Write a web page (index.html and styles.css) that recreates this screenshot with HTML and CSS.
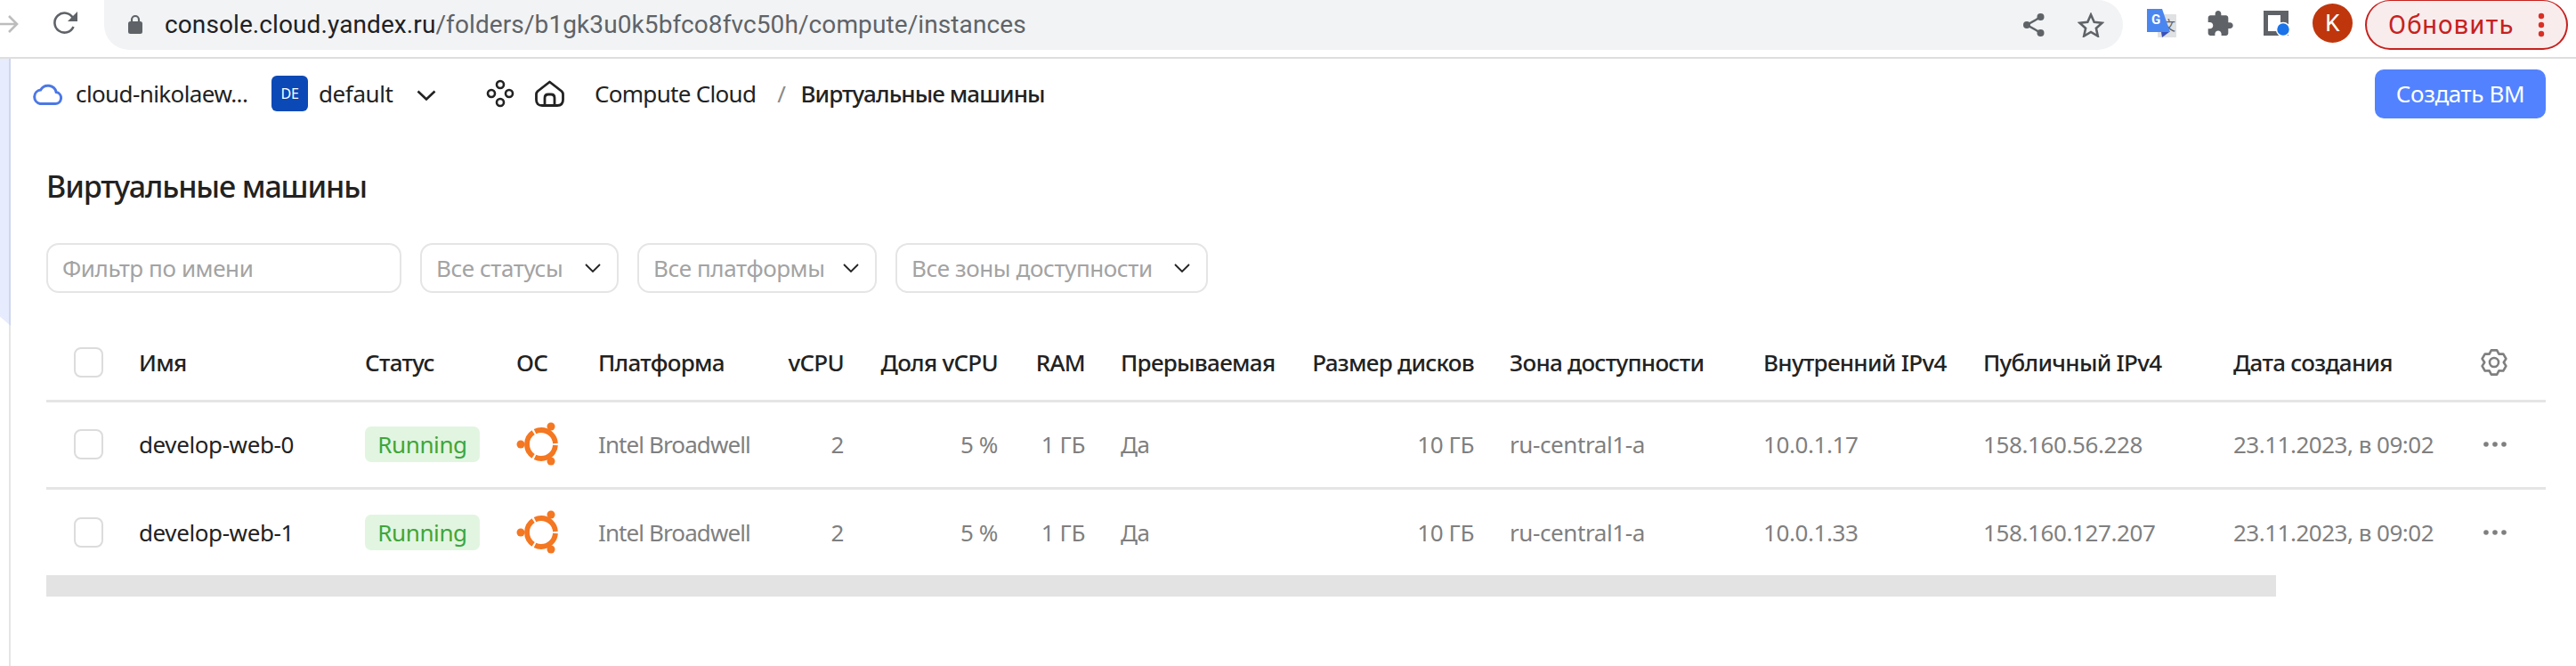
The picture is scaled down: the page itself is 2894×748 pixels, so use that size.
FILE: index.html
```html
<!DOCTYPE html>
<html lang="ru">
<head>
  <meta charset="UTF-8">
  <title>Виртуальные машины</title>
  <link rel="stylesheet" href="styles.css">
</head>
<body>

  <!-- Browser toolbar -->
  <div class="browser-bar">
    <svg class="icon-forward" width="22" height="22" viewBox="0 0 22 22"><path d="M-2 11H19M10 2l9 9-9 9" fill="none" stroke="#bdbdbd" stroke-width="2.6"/></svg>
    <svg class="icon-reload" width="28" height="26" viewBox="0 0 28 26"><path d="M22.5 17a11 11 0 1 1-.6-10" fill="none" stroke="#5f6368" stroke-width="2.6"/><path d="M27 0v11H16z" fill="#5f6368"/></svg>
    <div class="url-bar">
      <svg class="icon-lock" width="16" height="22" viewBox="0 0 16 22"><path d="M4 9V6a4 4 0 0 1 8 0v3" fill="none" stroke="#5f6368" stroke-width="2.2"/><rect y="8" width="16" height="14" rx="2.5" fill="#5f6368"/></svg>
      <span class="url-text"><b>console.cloud.yandex.ru</b>/folders/b1gk3u0k5bfco8fvc50h/compute/instances</span>
      <svg class="icon-share" width="24" height="26" viewBox="0 0 24 26"><path d="M20 4L4 13l16 9" fill="none" stroke="#5f6368" stroke-width="2.4"/><circle cx="19.5" cy="4" r="4" fill="#5f6368"/><circle cx="4" cy="13" r="4" fill="#5f6368"/><circle cx="19.5" cy="22" r="4" fill="#5f6368"/></svg>
      <svg class="icon-star" width="30" height="28" viewBox="0 0 30 28"><path d="M15 2.5l3.7 8.3 8.9.9-6.7 6 1.9 8.8-7.8-4.6-7.8 4.6 1.9-8.8-6.7-6 8.9-.9z" fill="none" stroke="#5f6368" stroke-width="2.6"/></svg>
    </div>
    <svg class="icon-translate" width="33" height="32" viewBox="0 0 33 32">
      <rect x="12" y="6" width="21" height="26" rx="1" fill="#dfe1e3"/>
      <text class="translate-zh" x="17" y="24">文</text>
      <path d="M0 0h17l9 26H0z" fill="#4a86f0"/>
      <path d="M16 26h9l-8 6z" fill="#3a50b8"/>
      <text class="translate-g" x="5" y="17">G</text>
    </svg>
    <svg class="icon-puzzle" width="30" height="28" viewBox="1 1 22 21"><path d="M20.5 11H19V7c0-1.1-.9-2-2-2h-4V3.5C13 2.12 11.88 1 10.5 1S8 2.12 8 3.5V5H4c-1.1 0-1.99.9-1.99 2v3.8H3.5c1.49 0 2.7 1.21 2.7 2.7s-1.21 2.7-2.7 2.7H2V20c0 1.1.9 2 2 2h3.8v-1.5c0-1.49 1.21-2.7 2.7-2.7 1.49 0 2.7 1.21 2.7 2.7V22H17c1.1 0 2-.9 2-2v-4h1.5c1.38 0 2.5-1.12 2.5-2.5S21.88 11 20.5 11z" fill="#5f6368"/></svg>
    <svg class="icon-reader" width="30" height="29" viewBox="0 0 30 29"><path d="M0 1h28v28H0z M5 6v18h14V6z" fill="#5f6368" fill-rule="evenodd"/><path d="M19 6h4v12h-4z" fill="#5f6368"/><circle cx="22" cy="22" r="7.5" fill="#1a73e8" stroke="#fff" stroke-width="1.5"/></svg>
    <div class="avatar">K</div>
    <div class="update-btn">
      <span>Обновить</span>
      <svg width="8" height="28" viewBox="0 0 8 28"><circle cx="4" cy="4" r="3.2" fill="#d93025"/><circle cx="4" cy="14" r="3.2" fill="#d93025"/><circle cx="4" cy="24" r="3.2" fill="#d93025"/></svg>
    </div>
  </div>

  <div class="page">
    <div class="rail"><div class="rail-tint"></div></div>

    <div class="content">
      <!-- Console header -->
      <div class="top-row">
        <svg class="icon-cloud" width="34" height="25" viewBox="0 0 34 25"><path d="M9 23.5h17a6.5 6.500 0 0 0 1.200-12.900A9.500 9.500 0 0 0 9.600 8.100 7.800 7.800 0 0 0 9 23.500z" fill="none" stroke="#4c78e6" stroke-width="3"/></svg>
        <span class="cloud-name">cloud-nikolaew...</span>
        <div class="folder-badge">DE</div>
        <span class="folder-name">default</span>
        <svg class="icon-chevron" width="22" height="12" viewBox="0 0 22 12"><path d="M1.500 1.500L11 10.500l9.500-9" fill="none" stroke="#222" stroke-width="2.600"/></svg>
        <svg class="icon-services" width="32" height="32" viewBox="0 0 32 32"><g fill="none" stroke="#222" stroke-width="2.600"><circle cx="16" cy="6" r="4"/><circle cx="6" cy="16" r="4"/><circle cx="26" cy="16" r="4"/><circle cx="16" cy="26" r="4"/></g></svg>
        <svg class="icon-home" width="33" height="30" viewBox="0 0 33 30"><g fill="none" stroke="#222" stroke-width="2.800" stroke-linejoin="round"><path d="M16.500 2L30 12.500q1.500 1.500 1.500 3.500V22q0 6.500-6.500 6.500H8q-6.500 0-6.500-6.500V16q0-2 1.500-3.500z"/><path d="M11 28v-8q0-4 4-4h3q4 0 4 4v8"/></g></svg>
        <span class="crumb">Compute Cloud</span>
        <span class="crumb-sep">/</span>
        <span class="crumb-current">Виртуальные машины</span>
        <button class="create-btn">Создать ВМ</button>
      </div>

      <h1 class="title">Виртуальные машины</h1>

      <div class="filters">
        <div class="filter filter-name">Фильтр по имени</div>
        <div class="filter filter-status">Все статусы <svg width="18" height="10" viewBox="0 0 18 10"><path d="M1 1l8 8 8-8" fill="none" stroke="#222" stroke-width="1.800"/></svg></div>
        <div class="filter filter-platform">Все платформы <svg width="18" height="10" viewBox="0 0 18 10"><path d="M1 1l8 8 8-8" fill="none" stroke="#222" stroke-width="1.800"/></svg></div>
        <div class="filter filter-zone">Все зоны доступности <svg width="18" height="10" viewBox="0 0 18 10"><path d="M1 1l8 8 8-8" fill="none" stroke="#222" stroke-width="1.800"/></svg></div>
      </div>

      <table class="vm-table">
        <colgroup>
          <col class="c-check"><col class="c-name"><col class="c-status"><col class="c-os"><col class="c-platform">
          <col class="c-vcpu"><col class="c-share"><col class="c-ram"><col class="c-preempt"><col class="c-disk">
          <col class="c-zone"><col class="c-int"><col class="c-pub"><col class="c-date"><col class="c-act">
        </colgroup>
        <thead>
          <tr>
            <th class="cell-check"><span class="checkbox"></span></th>
            <th>Имя</th>
            <th>Статус</th>
            <th>ОС</th>
            <th>Платформа</th>
            <th class="right">vCPU</th>
            <th class="right">Доля vCPU</th>
            <th class="right">RAM</th>
            <th>Прерываемая</th>
            <th class="right">Размер дисков</th>
            <th>Зона доступности</th>
            <th>Внутренний IPv4</th>
            <th>Публичный IPv4</th>
            <th>Дата создания</th>
            <th class="cell-act">
              <svg class="icon-gear" width="30" height="30" viewBox="0 0 30 30"><path d="M11.850 1.360H18.150L20.400 5.650 25.200 5.450 28.400 10.900 25.800 15 28.400 19.100 25.200 24.550 20.400 24.350 18.150 28.640H11.850L9.600 24.350 4.800 24.550 1.600 19.100 4.200 15 1.600 10.900 4.800 5.450 9.600 5.650Z" fill="none" stroke="#7f7f7f" stroke-width="2.600" stroke-linejoin="round"/><circle cx="15" cy="15" r="5" fill="none" stroke="#7f7f7f" stroke-width="2.600"/></svg>
            </th>
          </tr>
        </thead>
        <tbody>
          <tr>
            <td class="cell-check"><span class="checkbox"></span></td>
            <td class="vm-name">develop-web-0</td>
            <td><span class="status">Running</span></td>
            <td class="cell-os">
              <svg class="icon-ubuntu" width="52" height="56" viewBox="0 0 52 56"><circle cx="28" cy="28" r="16" pathLength="360" fill="none" stroke="#f47721" stroke-width="5.800" stroke-dasharray="112 8" stroke-dashoffset="-4"/><circle cx="5" cy="28" r="4.500" fill="#f47721"/><circle cx="39" cy="8" r="4.500" fill="#f47721"/><circle cx="39" cy="47" r="4.500" fill="#f47721"/></svg>
            </td>
            <td class="platform">Intel Broadwell</td>
            <td class="right">2</td>
            <td class="right">5 %</td>
            <td class="right">1 ГБ</td>
            <td>Да</td>
            <td class="right">10 ГБ</td>
            <td>ru-central1-a</td>
            <td>10.0.1.17</td>
            <td>158.160.56.228</td>
            <td class="created">23.11.2023, в 09:02</td>
            <td class="cell-act"><svg width="26" height="6" viewBox="0 0 26 6"><circle cx="3" cy="3" r="2.800" fill="#7f7f7f"/><circle cx="13" cy="3" r="2.800" fill="#7f7f7f"/><circle cx="23" cy="3" r="2.800" fill="#7f7f7f"/></svg></td>
          </tr>
          <tr>
            <td class="cell-check"><span class="checkbox"></span></td>
            <td class="vm-name">develop-web-1</td>
            <td><span class="status">Running</span></td>
            <td class="cell-os">
              <svg class="icon-ubuntu" width="52" height="56" viewBox="0 0 52 56"><circle cx="28" cy="28" r="16" pathLength="360" fill="none" stroke="#f47721" stroke-width="5.800" stroke-dasharray="112 8" stroke-dashoffset="-4"/><circle cx="5" cy="28" r="4.500" fill="#f47721"/><circle cx="39" cy="8" r="4.500" fill="#f47721"/><circle cx="39" cy="47" r="4.500" fill="#f47721"/></svg>
            </td>
            <td class="platform">Intel Broadwell</td>
            <td class="right">2</td>
            <td class="right">5 %</td>
            <td class="right">1 ГБ</td>
            <td>Да</td>
            <td class="right">10 ГБ</td>
            <td>ru-central1-a</td>
            <td>10.0.1.33</td>
            <td>158.160.127.207</td>
            <td class="created">23.11.2023, в 09:02</td>
            <td class="cell-act"><svg width="26" height="6" viewBox="0 0 26 6"><circle cx="3" cy="3" r="2.800" fill="#7f7f7f"/><circle cx="13" cy="3" r="2.800" fill="#7f7f7f"/><circle cx="23" cy="3" r="2.800" fill="#7f7f7f"/></svg></td>
          </tr>
        </tbody>
      </table>

      <div class="scrollbar"></div>
    </div>
  </div>

</body>
</html>
```

FILE: styles.css
```css
* {
  margin: 0;
  padding: 0;
  box-sizing: border-box;
}

body {
  width: 2894px;
  height: 748px;
  overflow: hidden;
  background: #fff;
  font-family: 'Noto Sans', sans-serif;
  color: #222;
  display: flex;
  flex-direction: column;
}

svg {
  display: block;
  flex-shrink: 0;
}

/* Browser toolbar */
.browser-bar {
  height: 66px;
  flex-shrink: 0;
  display: flex;
  align-items: flex-start;
  border-bottom: 2px solid #dedede;
}

.icon-forward {
  margin-top: 16px;
}

.icon-reload {
  margin: 13px 0 0 38px;
}

.url-bar {
  width: 2268px;
  height: 56px;
  margin-left: 29px;
  padding: 0 21px 0 27px;
  background: #f1f3f4;
  border-radius: 0 28px 28px 28px;
  display: flex;
  align-items: center;
}

.icon-lock {
  margin-bottom: 2px;
}

.url-text {
  margin-left: 25px;
  font-family: 'Roboto', sans-serif;
  font-size: 28px;
  letter-spacing: 0.1px;
  line-height: 34px;
  color: #5f6368;
  white-space: nowrap;
}

.url-text b {
  font-weight: 400;
  color: #202124;
}

.icon-share {
  margin-left: auto;
}

.icon-star {
  margin-left: 37px;
}

.icon-translate {
  margin: 10px 0 0 27px;
}

.translate-zh {
  font-family: 'Noto Sans CJK SC', sans-serif;
  font-size: 15px;
  fill: #5f6368;
}

.translate-g {
  font-family: 'Roboto', sans-serif;
  font-size: 15px;
  font-weight: 700;
  fill: #fff;
}

.icon-puzzle {
  margin: 12px 0 0 34px;
}

.icon-reader {
  margin: 11px 0 0 34px;
}

.avatar {
  width: 45px;
  height: 44px;
  margin: 4px 0 0 25px;
  border-radius: 50%;
  background: #bf360c;
  color: #fff;
  font-family: 'Roboto', sans-serif;
  font-size: 26px;
  display: flex;
  align-items: center;
  justify-content: center;
}

.update-btn {
  width: 228px;
  height: 56px;
  margin-left: 14px;
  padding: 0 24px 0 24px;
  border: 2px solid #c5221f;
  border-top-width: 1px;
  border-radius: 28px;
  background: #f9ecec;
  color: #c5221f;
  font-family: 'Roboto', sans-serif;
  font-size: 29px;
  letter-spacing: 1.2px;
  display: flex;
  align-items: center;
  justify-content: space-between;
}

/* Page */
.page {
  flex: 1;
  display: flex;
}

.rail {
  width: 12px;
  flex-shrink: 0;
  background: linear-gradient(to right, transparent 10px, #e5e5e5 10px);
}

.rail-tint {
  height: 300px;
  background: #e6ebfd;
  border-right: 2px solid #cfd6ec;
  clip-path: polygon(0 0, 100% 0, 100% 100%, 0 96.500%);
}

.content {
  flex: 1;
  padding: 0 34px 0 40px;
}

/* Console header */
.top-row {
  height: 78px;
  margin-left: -16px;
  display: flex;
  align-items: center;
  font-size: 26px;
  letter-spacing: -0.4px;
  line-height: 34px;
}

.cloud-name {
  margin-left: 15px;
  width: 220px;
  letter-spacing: -0.6px;
  white-space: nowrap;
}

.folder-badge {
  width: 41px;
  height: 40px;
  border-radius: 6px;
  background: #0b49b6;
  color: #fff;
  font-size: 16px;
  display: flex;
  align-items: center;
  justify-content: center;
}

.folder-name {
  margin-left: 12px;
  width: 110px;
}

.icon-chevron {
  margin-top: 3px;
}

.icon-services {
  margin-left: 56px;
}

.icon-home {
  margin-left: 23px;
}

.crumb {
  margin-left: 34px;
  letter-spacing: -0.7px;
}

.crumb-sep {
  margin-left: 24px;
  color: #8a8a8a;
}

.crumb-current {
  margin-left: 17px;
  font-weight: 500;
  letter-spacing: -0.9px;
}

.create-btn {
  width: 192px;
  height: 55px;
  margin-left: auto;
  border: 0;
  border-radius: 10px;
  background: #5282ff;
  color: #fff;
  font-family: inherit;
  font-size: 26px;
  letter-spacing: -0.4px;
}

.title {
  margin-top: 43px;
  font-size: 34px;
  font-weight: 500;
  letter-spacing: -1.1px;
  line-height: 44px;
}

/* Filters */
.filters {
  margin-top: 42px;
  display: flex;
  gap: 21px;
}

.filter {
  height: 56px;
  padding: 0 18px 0 16px;
  border: 2px solid #e5e5e5;
  border-radius: 14px;
  color: #a3a3a3;
  font-size: 26px;
  letter-spacing: -0.4px;
  display: flex;
  align-items: center;
  justify-content: space-between;
  white-space: nowrap;
}

.filter-name {
  width: 399px;
}

.filter-status {
  width: 223px;
}

.filter-platform {
  width: 269px;
}

.filter-zone {
  width: 351px;
}

/* Table */
.vm-table {
  width: 2808px;
  margin-top: 37px;
  table-layout: fixed;
  border-collapse: collapse;
  font-size: 26px;
  letter-spacing: -0.4px;
}

.c-check { width: 84px; }
.c-name { width: 254px; }
.c-status { width: 170px; }
.c-os { width: 92px; }
.c-platform { width: 211px; }
.c-vcpu { width: 105px; }
.c-share { width: 173px; }
.c-ram { width: 98px; }
.c-preempt { width: 213px; }
.c-disk { width: 224px; }
.c-zone { width: 285px; }
.c-int { width: 247px; }
.c-pub { width: 281px; }
.c-date { width: 279px; }
.c-act { width: 92px; }

.vm-table th {
  height: 84px;
  padding: 0 20px;
  font-weight: 500;
  letter-spacing: -0.7px;
  text-align: left;
  white-space: nowrap;
  border-bottom: 3px solid #e5e5e5;
}

.vm-table td {
  height: 98px;
  padding: 0 20px;
  color: #7f7f7f;
  white-space: nowrap;
  border-bottom: 3px solid #e5e5e5;
}

.vm-table tbody tr:last-child td {
  border-bottom: 0;
}

.vm-table .right {
  text-align: right;
}

.vm-table .vm-name {
  color: #222;
}

.vm-table .platform {
  letter-spacing: -0.9px;
}

.vm-table .created {
  letter-spacing: -0.5px;
}

.vm-table .cell-check {
  padding: 0 0 0 31px;
}

.vm-table .cell-os {
  padding: 0 0 0 20px;
}

.vm-table .cell-act {
  padding: 0 0 0 22px;
}

.icon-gear {
  margin-left: -3px;
}

.checkbox {
  display: block;
  width: 33px;
  height: 34px;
  border: 2px solid #dcdcdc;
  border-radius: 8px;
}

.status {
  display: inline-block;
  width: 129px;
  height: 40px;
  border-radius: 7px;
  background: #e2f5e1;
  color: #3ea63a;
  line-height: 40px;
  text-align: center;
}

.scrollbar {
  width: 2505px;
  height: 24px;
  background: #e3e3e3;
}
```
